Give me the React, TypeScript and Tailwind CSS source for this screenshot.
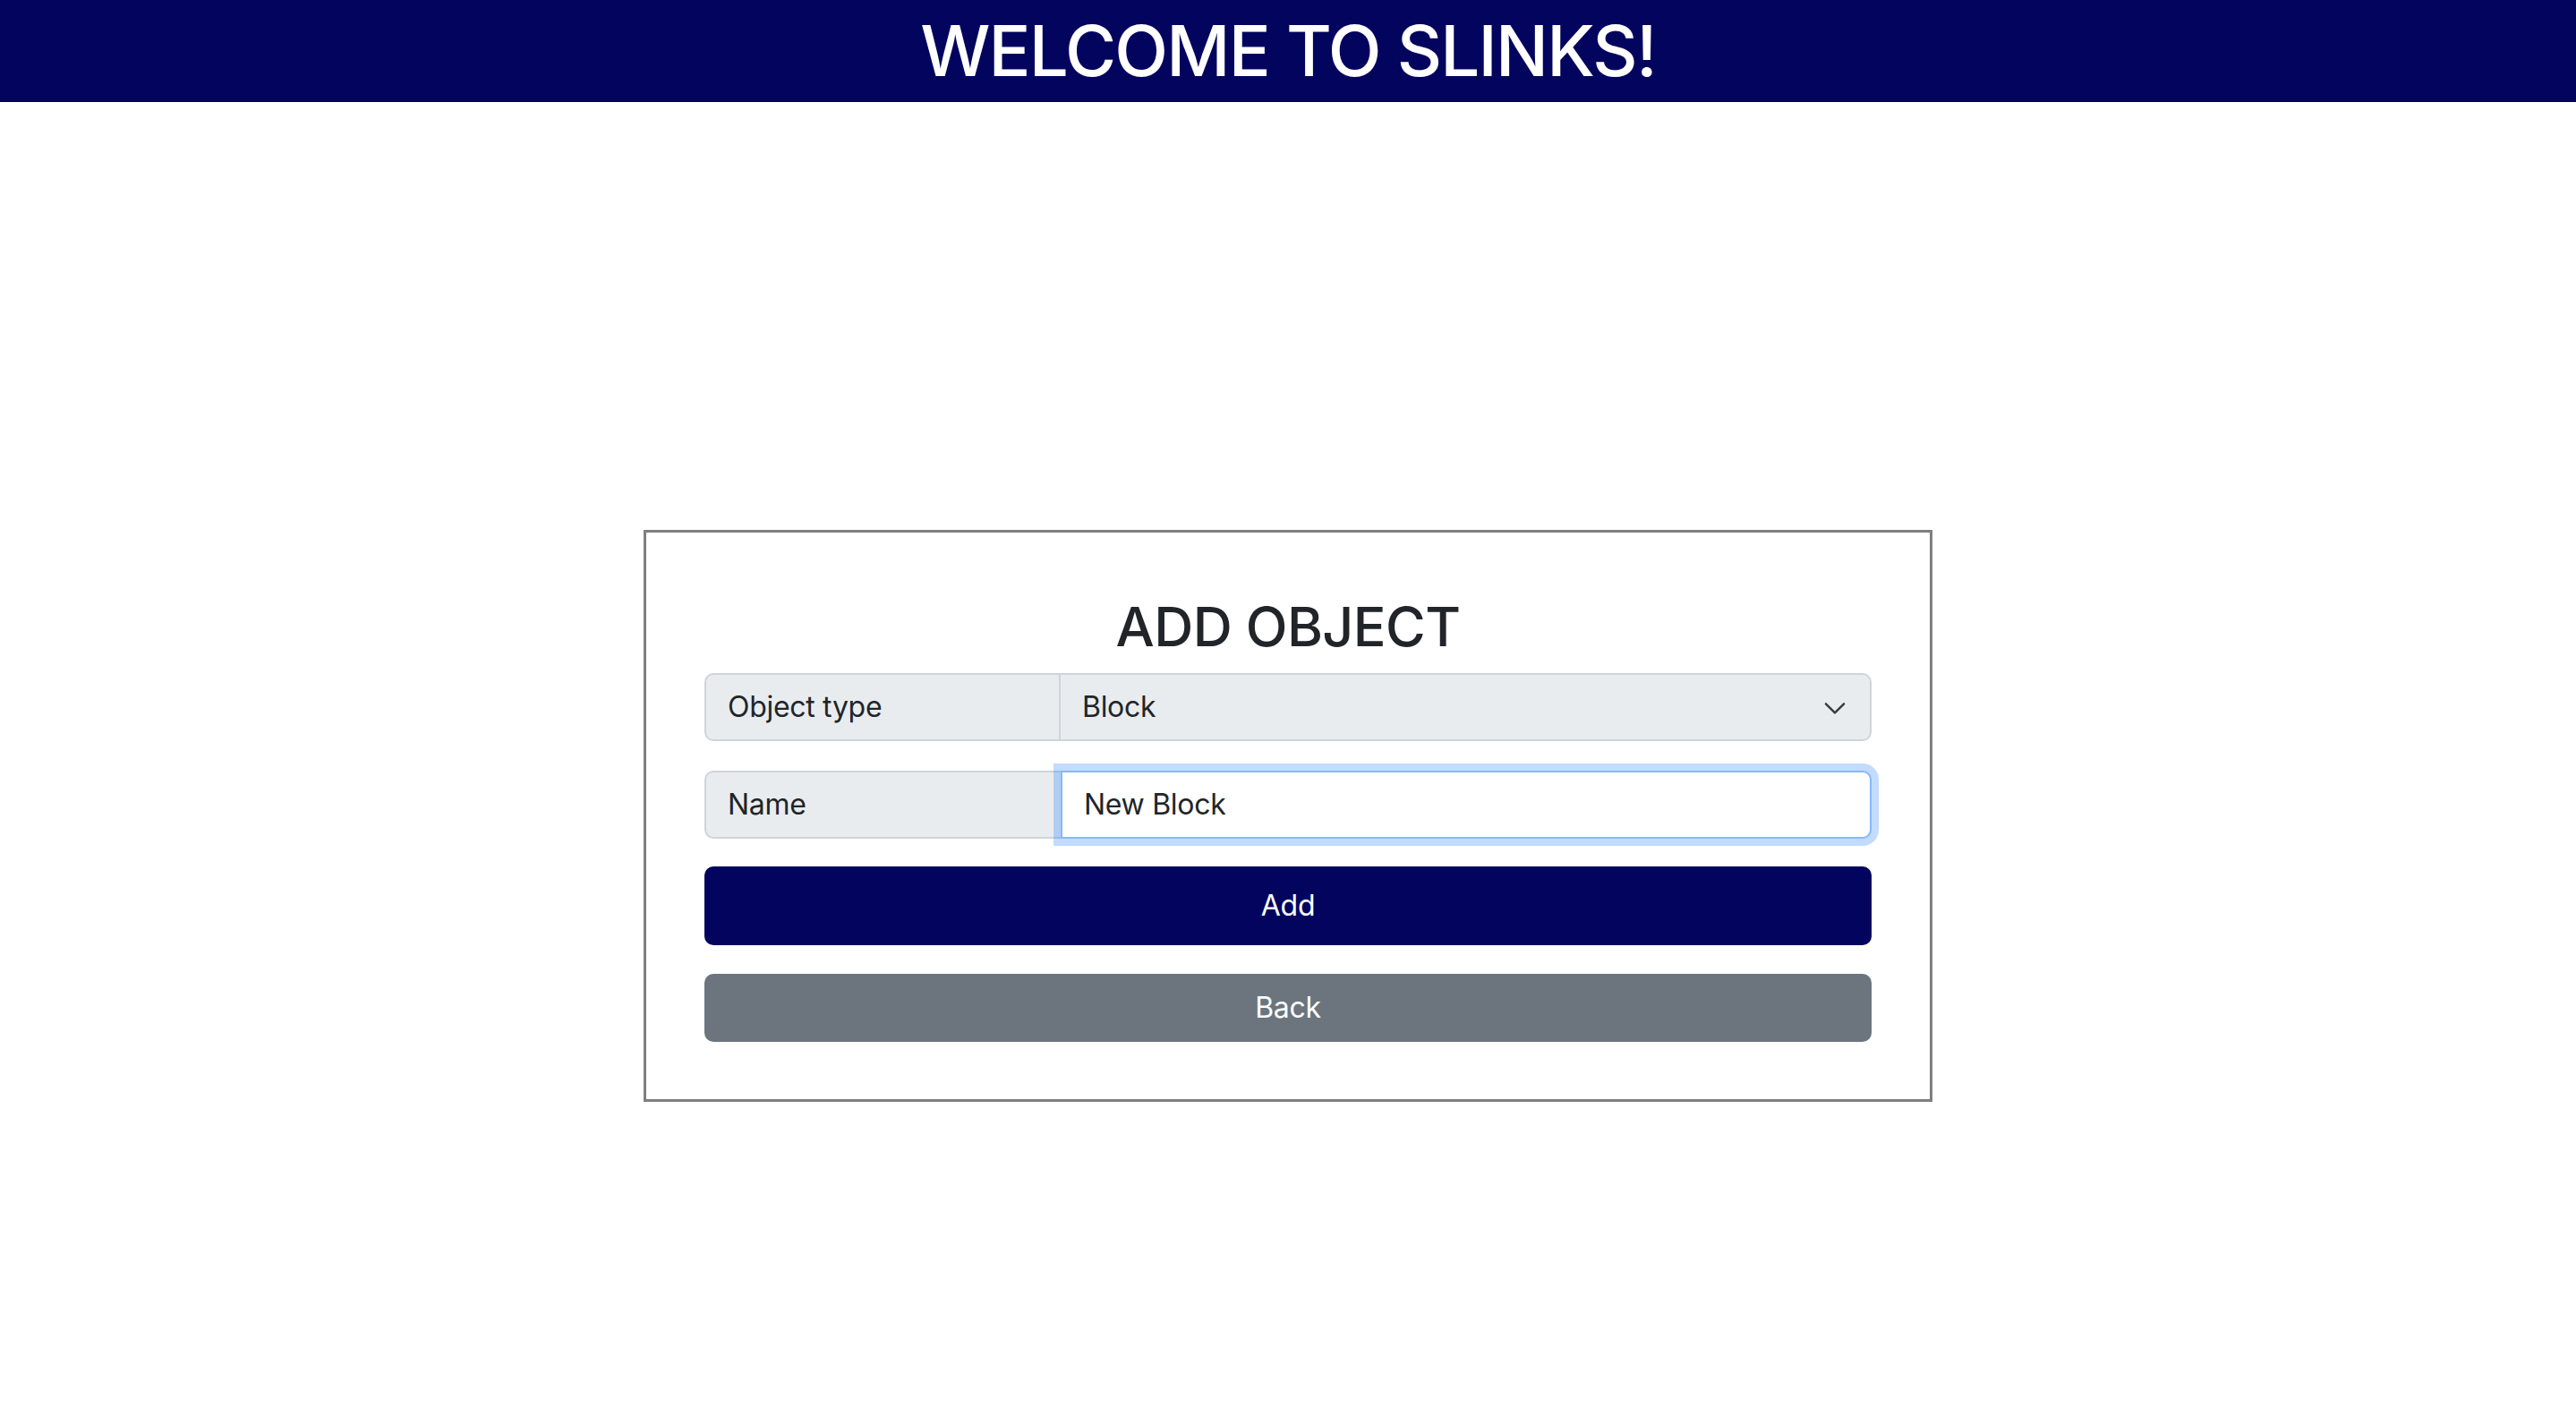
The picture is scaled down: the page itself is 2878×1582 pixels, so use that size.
import React from 'react'

const ChevronDown = () => (
    <svg width="30" height="22" viewBox="0 0 16 12" fill="none" className="shrink-0">
        <path d="m2.5 4 5.5 5.5 5.5-5.5" stroke="#343a40" strokeWidth="1.3" strokeLinecap="round" strokeLinejoin="round" />
    </svg>
)

const App = () => {
    return (
        <div className="min-h-[1582px] bg-white font-['Inter',sans-serif] text-[#212529]">
            <header className="h-[114px] bg-[#03045e] flex items-center justify-center">
                <h1 className="text-white text-[78px] font-medium leading-none tracking-[-1.8px]">WELCOME TO SLINKS!</h1>
            </header>

            <div className="flex justify-center mt-[478px]">
                <div className="w-[1440px] border-[3px] border-[#7f7f7f] px-[65px] pt-[69px] pb-[64px] flex flex-col">
                    <h2 className="text-center text-[61px] font-medium leading-[72px] tracking-[-0.6px] mb-[16px]">ADD OBJECT</h2>

                    <div className="flex h-[76px] text-[32px] tracking-[-0.3px]">
                        <div className="w-[398px] flex items-center px-[24px] bg-[#e9ecef] border-2 border-[#ced4da] rounded-l-[10px]">
                            Object type
                        </div>
                        <div className="flex-1 flex items-center justify-between pl-[24px] pr-[24px] bg-[#e9ecef] border-2 border-l-0 border-[#ced4da] rounded-r-[10px]">
                            <span>Block</span>
                            <ChevronDown />
                        </div>
                    </div>

                    <div className="flex h-[76px] text-[32px] tracking-[-0.3px] mt-[33px]">
                        <div className="w-[398px] flex items-center px-[24px] bg-[#e9ecef] border-2 border-r-0 border-[#ced4da] rounded-l-[10px]">
                            Name
                        </div>
                        <input
                            readOnly
                            value="New Block"
                            className="relative z-10 flex-1 px-[24px] bg-white border-2 border-[#86b7fe] rounded-r-[10px] outline-none shadow-[0_0_0_8px_rgba(13,110,253,0.25)] text-[32px] tracking-[-0.3px] text-[#212529]"
                        />
                    </div>

                    <button className="mt-[31px] h-[88px] rounded-[10px] bg-[#03045e] text-white text-[32px] tracking-[-0.3px]">Add</button>
                    <button className="mt-[32px] h-[76px] rounded-[10px] bg-[#6c757d] text-white text-[32px] tracking-[-0.3px]">Back</button>
                </div>
            </div>
        </div>
    )
}

export default App
